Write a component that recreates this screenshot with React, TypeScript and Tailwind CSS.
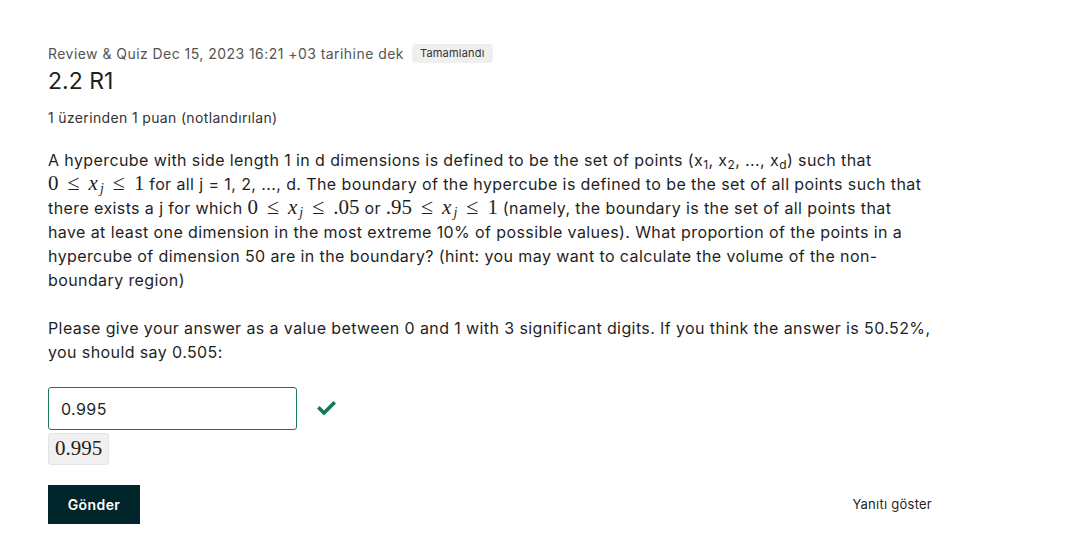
import React from "react";

const M = ({ children }: { children: React.ReactNode }) => (
  <span className="text-[21px] leading-[0] tracking-normal" style={{ fontFamily: '"Liberation Serif", serif' }}>
    {children}
  </span>
);

const Le = () => <span className="mx-[9px] text-[22px]">≤</span>;

const X = () => (
  <span className="italic">
    x<sub className="text-[14px] relative top-[3px] ml-[2px]">j</sub>
  </span>
);

export default function App() {
  return (
    <div className="min-h-screen bg-white text-[#1f1f1f]" style={{ fontFamily: 'Inter, "Open Sans", sans-serif' }}>
      <div className="pl-[48px] pt-[43px] w-[1000px]">
        <div className="flex items-center gap-[8px] h-[20px]">
          <span className="text-[14px] tracking-[0.45px] text-[#545454]">Review &amp; Quiz Dec 15, 2023 16:21 +03 tarihine dek</span>
          <span className="text-[11px] tracking-[0.2px] bg-[#efefef] rounded-[4px] px-[8px] h-[19px] flex items-center text-[#333]">Tamamlandı</span>
        </div>
        <div className="text-[23px] leading-[30px] mt-[3px] text-[#1f1f1f]">2.2 R1</div>
        <div className="text-[14px] tracking-[0.35px] leading-[20px] mt-[12px] text-[#333]">1 üzerinden 1 puan (notlandırılan)</div>

        <p className="text-[16px] tracking-[0.4px] leading-[24px] mt-[20px]">
          A hypercube with side length 1 in d dimensions is defined to be the set of points (x<sub className="text-[12px]">1</sub>, x<sub className="text-[12px]">2</sub>, ..., x<sub className="text-[12px]">d</sub>) such that
          <br />
          <M>0<Le /><X /><Le />1</M> for all j = 1, 2, ..., d. The boundary of the hypercube is defined to be the set of all points such that
          <br />
          there exists a j for which <M>0<Le /><X /><Le />.05</M> or <M>.95<Le /><X /><Le />1</M> (namely, the boundary is the set of all points that
          <br />
          have at least one dimension in the most extreme 10% of possible values). What proportion of the points in a
          <br />
          hypercube of dimension 50 are in the boundary? (hint: you may want to calculate the volume of the non-
          <br />
          boundary region)
        </p>

        <p className="text-[16px] tracking-[0.4px] leading-[24px] mt-[24px]">
          Please give your answer as a value between 0 and 1 with 3 significant digits. If you think the answer is 50.52%,
          <br />
          you should say 0.505:
        </p>

        <div className="flex items-center mt-[23px]">
          <div className="w-[249px] h-[43px] border border-[#1b7a4d] rounded-[3px] flex items-center pl-[12px] text-[16px] tracking-[0.4px]">
            0.995
          </div>
          <svg className="ml-[20px]" width="19" height="15" viewBox="0 0 19 15">
            <path d="M2.5 7.5 L7 12 L16.5 2.5" fill="none" stroke="#127b52" strokeWidth="3.6" strokeLinecap="square" />
          </svg>
        </div>

        <div
          className="mt-[3px] inline-flex items-center h-[32px] px-[6px] bg-[#f0f0f0] border border-[#e4e4e4] rounded-[3px] text-[21px] text-[#222]"
          style={{ fontFamily: '"Liberation Serif", serif' }}
        >
          0.995
        </div>

        <div className="flex items-center justify-between w-[884px] mt-[20px]">
          <button className="bg-[#00262c] text-white text-[14px] tracking-[0.4px] font-semibold w-[92px] h-[39px]">Gönder</button>
          <span className="text-[13px] tracking-[0.25px] text-[#1f1f1f]">Yanıtı göster</span>
        </div>
      </div>
    </div>
  );
}
